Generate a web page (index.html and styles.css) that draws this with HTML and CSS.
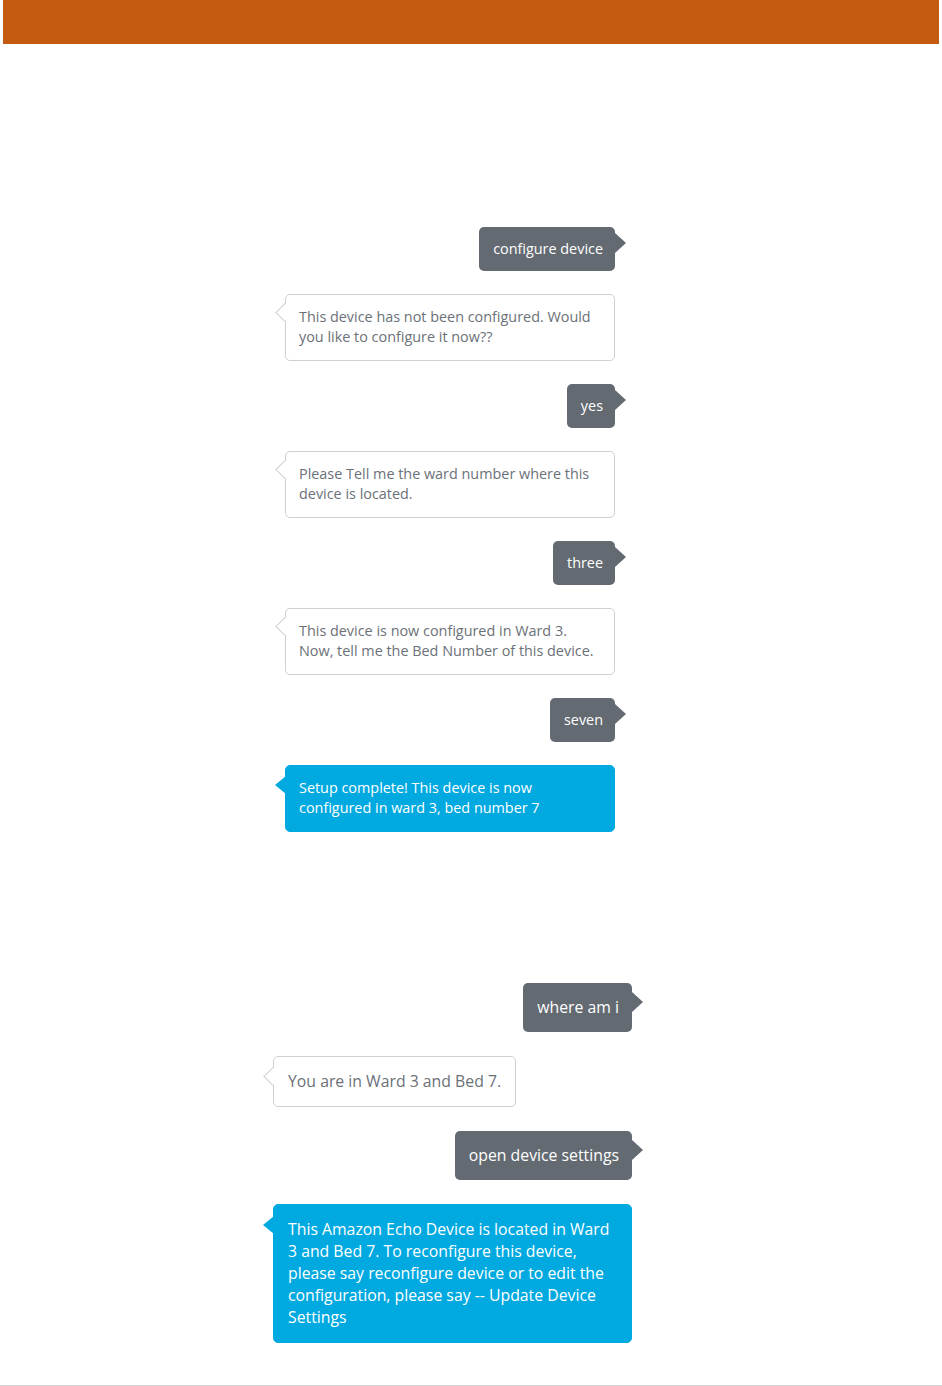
FILE: index.html
```html
<!DOCTYPE html>
<html lang="en">
<head>
<meta charset="utf-8">
<title>Device configuration</title>
<link rel="stylesheet" href="styles.css">
</head>
<body>
<div class="page">
  <div class="header"></div>
  <div class="chat chat-one">
    <div class="bubble user">configure device</div>
    <div class="bubble bot">This device has not been configured. Would you like to configure it now??</div>
    <div class="bubble user">yes</div>
    <div class="bubble bot">Please Tell me the ward number where this device is located.</div>
    <div class="bubble user">three</div>
    <div class="bubble bot">This device is now configured in Ward 3. Now, tell me the Bed Number of this device.</div>
    <div class="bubble user">seven</div>
    <div class="bubble bot final">Setup complete! This device is now configured in ward 3, bed number 7</div>
  </div>
  <div class="chat chat-two">
    <div class="bubble user">where am i</div>
    <div class="bubble bot short">You are in Ward 3 and Bed 7.</div>
    <div class="bubble user">open device settings</div>
    <div class="bubble bot final">This Amazon Echo Device is located in Ward 3 and Bed 7. To reconfigure this device, please say reconfigure device or to edit the configuration, please say -- Update Device Settings</div>
  </div>
</div>
<div class="footer-line"></div>
</body>
</html>
```
FILE: styles.css
```css
html, body {
  margin: 0;
  padding: 0;
  background: #ffffff;
}
body {
  font-family: "Open Sans", "Noto Sans", "Liberation Sans", sans-serif;
  height: 1386px;
  position: relative;
  overflow: hidden;
}
.page {
  padding: 0 3px;
}
.header {
  height: 44px;
  background: #c55a11;
}
.chat {
  display: flex;
  flex-direction: column;
  align-items: flex-end;
}
.chat-one {
  margin: 183px 0 0 282px;
  width: 330px;
  gap: 23px;
  font-size: 14.4px;
  line-height: 20px;
}
.chat-two {
  margin: 151px 0 0 270px;
  width: 359px;
  gap: 24px;
  font-size: 15.8px;
  line-height: 22px;
}
.bubble {
  position: relative;
  border-radius: 5px;
  box-sizing: border-box;
}
.user {
  background: #636a72;
  color: #ffffff;
  padding: 12px 12px 12px 14px;
}
.user::after {
  content: "";
  position: absolute;
  right: -11px;
  top: 6px;
  border-left: 11px solid #636a72;
  border-top: 10px solid transparent;
  border-bottom: 10px solid transparent;
}
.bot {
  align-self: flex-start;
  width: 100%;
  background: #ffffff;
  border: 1px solid #cdd1d4;
  color: #6b7178;
  padding: 12px 13px 13px 13px;
}
.bot::before {
  content: "";
  position: absolute;
  left: -8px;
  top: 11px;
  width: 12px;
  height: 12px;
  background: #ffffff;
  border-left: 1px solid #cdd1d4;
  border-bottom: 1px solid #cdd1d4;
  transform: rotate(45deg);
}
.bot.final {
  background: #00a9e0;
  border-color: #00a9e0;
  color: #ffffff;
}
.bot.final::before {
  background: none;
  border: none;
  transform: none;
  width: 0;
  height: 0;
  left: -11px;
  top: 10px;
  border-right: 11px solid #00a9e0;
  border-top: 9px solid transparent;
  border-bottom: 9px solid transparent;
}
.chat-two .user {
  padding: 13px 13px 14px 14px;
}
.chat-two .user::after {
  top: 9px;
}
.chat-two .bot {
  padding: 13px 14px 14px 14px;
}
.chat-two .bot::before {
  top: 13px;
}
.chat-two .bot.final {
  padding: 13px 15px 14px 14px;
}
.chat-two .bot.final::before {
  top: 11px;
}
.bot.short {
  width: auto;
}
.footer-line {
  position: absolute;
  left: 0;
  right: 0;
  bottom: 0;
  height: 1px;
  background: #d2d2d2;
}
```
